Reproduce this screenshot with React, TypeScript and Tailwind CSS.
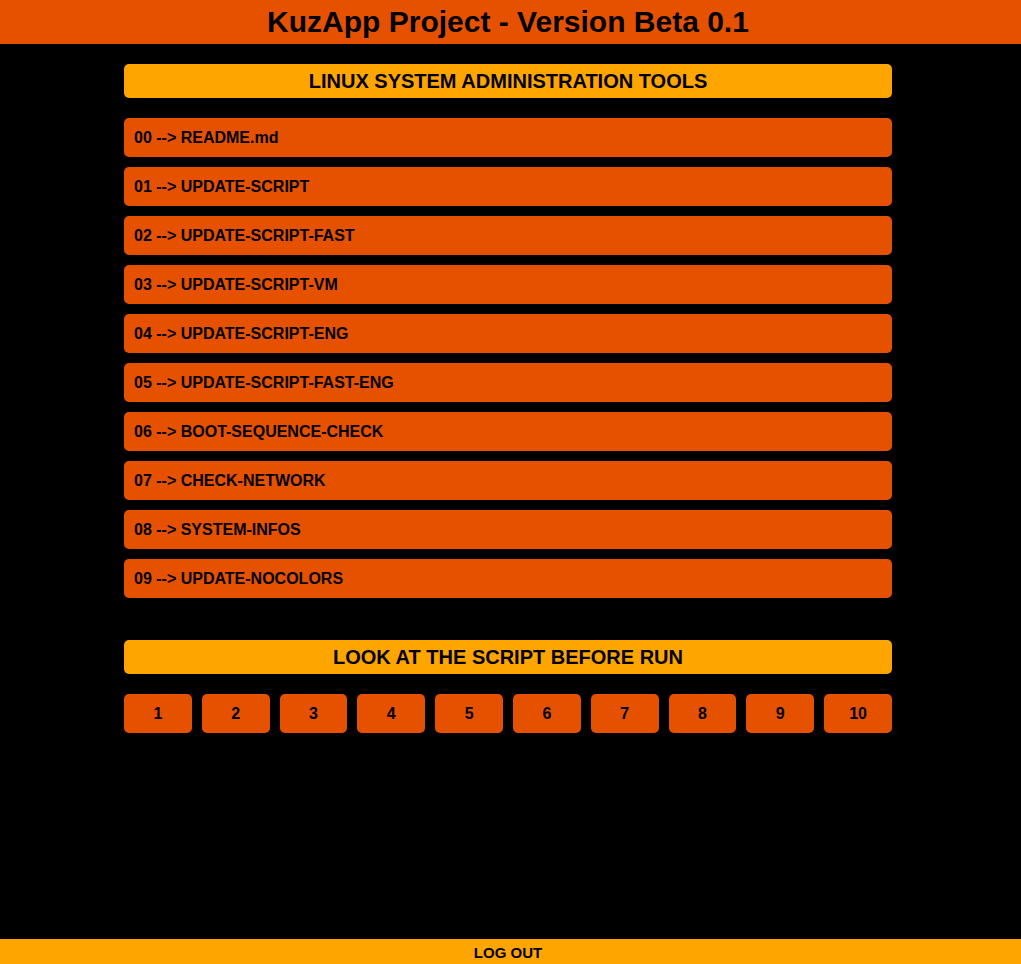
import React from 'react';

const scripts = [
  '00 --> README.md',
  '01 --> UPDATE-SCRIPT',
  '02 --> UPDATE-SCRIPT-FAST',
  '03 --> UPDATE-SCRIPT-VM',
  '04 --> UPDATE-SCRIPT-ENG',
  '05 --> UPDATE-SCRIPT-FAST-ENG',
  '06 --> BOOT-SEQUENCE-CHECK',
  '07 --> CHECK-NETWORK',
  '08 --> SYSTEM-INFOS',
  '09 --> UPDATE-NOCOLORS',
];

function SectionTitle({ children }: { children: React.ReactNode }) {
  return (
    <div className="h-[34px] rounded-[5px] bg-[#ffa500] flex items-center justify-center text-[20px] font-bold text-black">
      {children}
    </div>
  );
}

export default function App() {
  return (
    <div className="min-h-screen flex flex-col bg-black text-black font-['Liberation_Sans',Arial,sans-serif]">
      <header className="h-[44px] bg-[#e65100] flex items-center justify-center pr-[5px]">
        <h1 className="text-[30px] font-bold leading-none">KuzApp Project - Version Beta 0.1</h1>
      </header>

      <main className="flex-1 pr-[5px] pt-[20px]">
        <div className="w-[768px] mx-auto">
          <SectionTitle>LINUX SYSTEM ADMINISTRATION TOOLS</SectionTitle>
          <div className="mt-[20px] flex flex-col gap-[10px]">
            {scripts.map(s => (
              <div key={s} className="h-[39px] rounded-[5px] bg-[#e65100] flex items-center px-[10px] text-[16px] font-bold cursor-pointer">
                {s}
              </div>
            ))}
          </div>

          <div className="mt-[42px]">
            <SectionTitle>LOOK AT THE SCRIPT BEFORE RUN</SectionTitle>
          </div>
          <div className="mt-[20px] grid grid-cols-10 gap-[10px]">
            {Array.from({ length: 10 }, (_, i) => (
              <div key={i} className="h-[39px] rounded-[5px] bg-[#e65100] flex items-center justify-center text-[16px] font-bold cursor-pointer">
                {i + 1}
              </div>
            ))}
          </div>
        </div>
      </main>

      <footer className="h-[25px] bg-[#ffa500] flex items-center justify-center pr-[5px] pt-[4px] text-[15px] font-bold">
        LOG OUT
      </footer>
    </div>
  );
}
